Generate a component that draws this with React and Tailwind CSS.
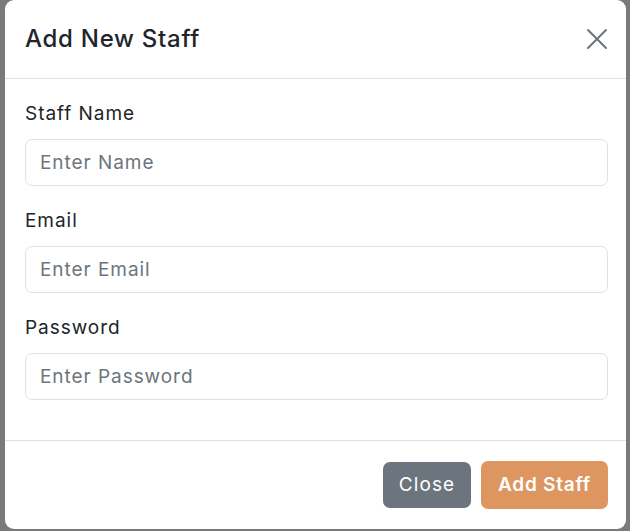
import React from 'react'

function Field({ label, type = 'text', placeholder }) {
  return (
    <div className="mb-[21px]">
      <label className="block text-[19px] leading-[27px] tracking-[0.05em] text-[#212529] mb-[12px]">{label}</label>
      <input
        type={type}
        placeholder={placeholder}
        className="block w-full h-[47px] px-[14px] rounded-[7px] border border-[#dee2e6] bg-white text-[19px] tracking-[0.05em] text-[#212529] placeholder:text-[#6c757d] outline-none"
      />
    </div>
  )
}

export default function App() {
  return (
    <div className="min-h-[531px] w-[630px] bg-[#7a7a7a] px-[5px] pb-[2px]" style={{ fontFamily: 'Inter, "Noto Sans", sans-serif' }}>
      <div className="bg-white rounded-[9px] w-[621px] h-[529px] flex flex-col">
        {/* Header */}
        <div className="h-[79px] flex items-center justify-between pl-5 pr-[18px] border-b border-[#dee2e6]">
          <h5 className="text-[24px] leading-[36px] font-medium tracking-[0.03em] text-[#212529]">Add New Staff</h5>
          <button className="w-[22px] h-[22px] flex items-center justify-center text-[#6c757d]">
            <svg width="22" height="22" viewBox="0 0 22 22" fill="none" stroke="currentColor" strokeWidth="2" strokeLinecap="round">
              <path d="M2 2L20 20M20 2L2 20" />
            </svg>
          </button>
        </div>

        {/* Body */}
        <div className="pl-5 pr-[18px] pt-[21px] pb-[19px] border-b border-[#dee2e6]">
          <Field label="Staff Name" placeholder="Enter Name" />
          <Field label="Email" type="email" placeholder="Enter Email" />
          <Field label="Password" type="password" placeholder="Enter Password" />
        </div>

        {/* Footer */}
        <div className="flex-1 flex items-center justify-end gap-[10px] pl-5 pr-[18px] pb-[1px]">
          <button className="h-[46px] w-[88px] pt-[2px] rounded-[7px] bg-[#6c757d] text-white text-[19px] tracking-[0.06em]">Close</button>
          <button className="h-[48px] w-[127px] pt-[2px] rounded-[7px] bg-[#dd965f] text-white text-[19px] font-semibold tracking-[0.04em]">Add Staff</button>
        </div>
      </div>
    </div>
  )
}
